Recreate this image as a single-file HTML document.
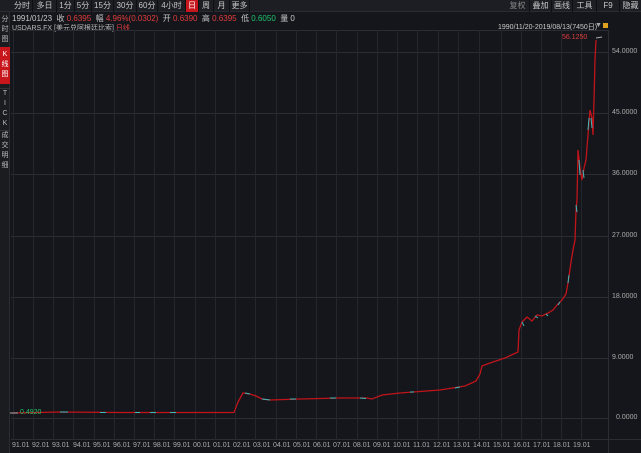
<!DOCTYPE html>
<html><head><meta charset="utf-8"><style>
*{margin:0;padding:0;box-sizing:border-box}
body{width:641px;height:453px;background:#14161b;font-family:"Liberation Sans","Noto Sans CJK SC",sans-serif;color:#c8c8c8;position:relative;overflow:hidden;font-size:8px}
.tb{position:absolute;left:0;top:0;width:641px;height:12px;background:#1c1e23;border-bottom:1px solid #2a2c31}
.b{position:absolute;top:0;height:12px;line-height:12px;text-align:center;color:#c8c8c8;border-right:1px solid #0e0f12;font-size:8px}
.on{background:#c8161d;color:#fff}
.side{position:absolute;left:0;top:12px;width:10px;height:441px;background:#1a1c20;border-right:1px solid #2a2c31}
.s{position:absolute;left:0;width:10px;text-align:center;font-size:7px;line-height:10px;color:#bbb}
.info{position:absolute;left:12px;top:13px;font-size:8px;white-space:nowrap}
.r{color:#e23c3c}.g{color:#1ec36e}
.leg{position:absolute;left:12px;top:23px;font-size:7px;color:#bbb}
.ax{position:absolute;left:612px;font-size:7px;color:#aaa}
.dt{position:absolute;top:442px;font-size:7px;color:#aaa}
</style></head><body>
<div class="tb">
<div class="b" style="left:12px;width:21px">分时</div>
<div class="b" style="left:33px;width:24px">多日</div>
<div class="b" style="left:57px;width:18px">1分</div>
<div class="b" style="left:75px;width:17px">5分</div>
<div class="b" style="left:92px;width:22px">15分</div>
<div class="b" style="left:114px;width:23px">30分</div>
<div class="b" style="left:137px;width:21px">60分</div>
<div class="b" style="left:158px;width:28px">4小时</div>
<div class="b on" style="left:186px;width:13px">日</div>
<div class="b" style="left:199px;width:15px">周</div>
<div class="b" style="left:214px;width:16px">月</div>
<div class="b" style="left:230px;width:20px">更多</div>
<div class="b" style="left:506px;width:24px;color:#888">复权</div>
<div class="b" style="left:530px;width:22px">叠加</div>
<div class="b" style="left:552px;width:21px">画线</div>
<div class="b" style="left:573px;width:24px">工具</div>
<div class="b" style="left:597px;width:23px">F9</div>
<div class="b" style="left:620px;width:21px;border:none">隐藏</div>
</div>
<div class="side">
<div class="s" style="top:3px">分<br>时<br>图</div>
<div class="s" style="top:35px;height:37px;background:#c8161d;color:#fff;padding-top:3px">K<br>线<br>图</div>
<div class="s" style="top:76px;border-top:1px solid #333">T<br>I<br>C<br>K</div>
<div class="s" style="top:118px;border-top:1px solid #333">成<br>交<br>明<br>细</div>
</div>
<div class="info">1991/01/23 &nbsp;收 <span class="r">0.6395</span> &nbsp;幅 <span class="r">4.96%(0.0302)</span> &nbsp;开 <span class="r">0.6390</span> &nbsp;高 <span class="r">0.6395</span> &nbsp;低 <span class="g">0.6050</span> &nbsp;量 0</div>
<div class="leg">USDARS.FX [美元兑阿根廷比索] <span class="r">日线</span></div>
<div style="position:absolute;left:498px;top:22px;font-size:7px;color:#ccc;text-decoration:underline">1990/11/20-2019/08/13(7450日)</div>
<div style="position:absolute;left:595px;top:22px;font-size:7px;color:#aaa">▼</div>
<div style="position:absolute;left:603px;top:23px;width:5px;height:5px;background:#e0a020"></div>
<svg width="641" height="453" style="position:absolute;left:0;top:0">
<g stroke="#2a2d33" stroke-width="1">
<line x1="11" y1="30.5" x2="608" y2="30.5"/>
<line x1="11" y1="52.5" x2="608" y2="52.5"/>
<line x1="11" y1="113.5" x2="608" y2="113.5"/>
<line x1="11" y1="174.5" x2="608" y2="174.5"/>
<line x1="11" y1="236.5" x2="608" y2="236.5"/>
<line x1="11" y1="297.5" x2="608" y2="297.5"/>
<line x1="11" y1="358.5" x2="608" y2="358.5"/>
<line x1="11" y1="418.5" x2="608" y2="418.5"/>
<line x1="11" y1="439.5" x2="641" y2="439.5"/>
<line x1="608.5" y1="30" x2="608.5" y2="453"/>
</g>
<g stroke="#23262b">
<line x1="13.5" y1="30" x2="13.5" y2="440"/><line x1="33.5" y1="30" x2="33.5" y2="440"/><line x1="53.5" y1="30" x2="53.5" y2="440"/><line x1="73.5" y1="30" x2="73.5" y2="440"/><line x1="94.5" y1="30" x2="94.5" y2="440"/><line x1="114.5" y1="30" x2="114.5" y2="440"/><line x1="134.5" y1="30" x2="134.5" y2="440"/><line x1="154.5" y1="30" x2="154.5" y2="440"/><line x1="174.5" y1="30" x2="174.5" y2="440"/><line x1="195.5" y1="30" x2="195.5" y2="440"/><line x1="215.5" y1="30" x2="215.5" y2="440"/><line x1="235.5" y1="30" x2="235.5" y2="440"/><line x1="255.5" y1="30" x2="255.5" y2="440"/><line x1="276.5" y1="30" x2="276.5" y2="440"/><line x1="296.5" y1="30" x2="296.5" y2="440"/><line x1="316.5" y1="30" x2="316.5" y2="440"/><line x1="336.5" y1="30" x2="336.5" y2="440"/><line x1="357.5" y1="30" x2="357.5" y2="440"/><line x1="377.5" y1="30" x2="377.5" y2="440"/><line x1="397.5" y1="30" x2="397.5" y2="440"/><line x1="417.5" y1="30" x2="417.5" y2="440"/><line x1="438.5" y1="30" x2="438.5" y2="440"/><line x1="458.5" y1="30" x2="458.5" y2="440"/><line x1="479.5" y1="30" x2="479.5" y2="440"/><line x1="501.5" y1="30" x2="501.5" y2="440"/><line x1="521.5" y1="30" x2="521.5" y2="440"/><line x1="541.5" y1="30" x2="541.5" y2="440"/><line x1="561.5" y1="30" x2="561.5" y2="440"/><line x1="581.5" y1="30" x2="581.5" y2="440"/>
</g>
<polyline fill="none" stroke="#c0141b" stroke-width="1.3" points="12,413 60,412 120,412.5 180,412.5 234,412.5 238,402 243,393 250,394 256,396 262,399 270,400 300,399 340,398 367,398 372,399 382,395 400,393 440,390 465,386 476,381 480,374 482,366 490,363 505,358 518,352 519,330 522,322 527,317 532,321 537,315 542,316 548,313 553,310 557,305 562,300 566,294 568,283 571,262 573,250 575,240 576,210 577,200 578,150 580,168 582,180 584,168 586,160 588,135 590,110 592,118 593,135 594,100 595,60 596,40"/>
<path fill="none" stroke="#3fb8b8" stroke-width="1" d="M60,412 L68,412 M100,412.5 L106,412.5 M135,412.5 L140,412.5 M150,412.5 L156,412.5 M170,412.5 L176,412.5 M245,393 L250,394 M262,399 L270,400 M290,399 L296,399 M330,398 L336,398 M360,398 L366,398.5 M410,392 L414,392 M455,388 L460,387 M522,322 L524,326 M535,316 L538,318 M546,314 L548,316 M558,305 L560,302 M568,283 L569,275 M576,205 L577,212 M579,160 L580,175 M583,170 L584,178 M588,130 L589,118 M591,118 L592,128"/>
<line x1="596" y1="38" x2="602" y2="37" stroke="#aaa"/>
<line x1="10" y1="413" x2="18" y2="413" stroke="#aaa"/>
</svg>
<div style="position:absolute;left:562px;top:34px;font-size:7px;color:#e23c3c">56.1250</div>
<div style="position:absolute;left:20px;top:409px;font-size:7px;color:#1ec36e">0.4920</div>
<div class="ax" style="top:48px">54.0000</div>
<div class="ax" style="top:109px">45.0000</div>
<div class="ax" style="top:170px">36.0000</div>
<div class="ax" style="top:232px">27.0000</div>
<div class="ax" style="top:293px">18.0000</div>
<div class="ax" style="top:354px">9.0000</div>
<div class="ax" style="top:414px;left:616px">0.0000</div>
<div class="dt" style="left:12px">91.01</div><div class="dt" style="left:32px">92.01</div><div class="dt" style="left:52px">93.01</div><div class="dt" style="left:73px">94.01</div><div class="dt" style="left:93px">95.01</div><div class="dt" style="left:113px">96.01</div><div class="dt" style="left:133px">97.01</div><div class="dt" style="left:153px">98.01</div><div class="dt" style="left:173px">99.01</div><div class="dt" style="left:193px">00.01</div><div class="dt" style="left:213px">01.01</div><div class="dt" style="left:233px">02.01</div><div class="dt" style="left:253px">03.01</div><div class="dt" style="left:273px">04.01</div><div class="dt" style="left:293px">05.01</div><div class="dt" style="left:313px">06.01</div><div class="dt" style="left:333px">07.01</div><div class="dt" style="left:353px">08.01</div><div class="dt" style="left:373px">09.01</div><div class="dt" style="left:393px">10.01</div><div class="dt" style="left:413px">11.01</div><div class="dt" style="left:433px">12.01</div><div class="dt" style="left:453px">13.01</div><div class="dt" style="left:473px">14.01</div><div class="dt" style="left:493px">15.01</div><div class="dt" style="left:513px">16.01</div><div class="dt" style="left:533px">17.01</div><div class="dt" style="left:553px">18.01</div><div class="dt" style="left:573px">19.01</div>
</body></html>
